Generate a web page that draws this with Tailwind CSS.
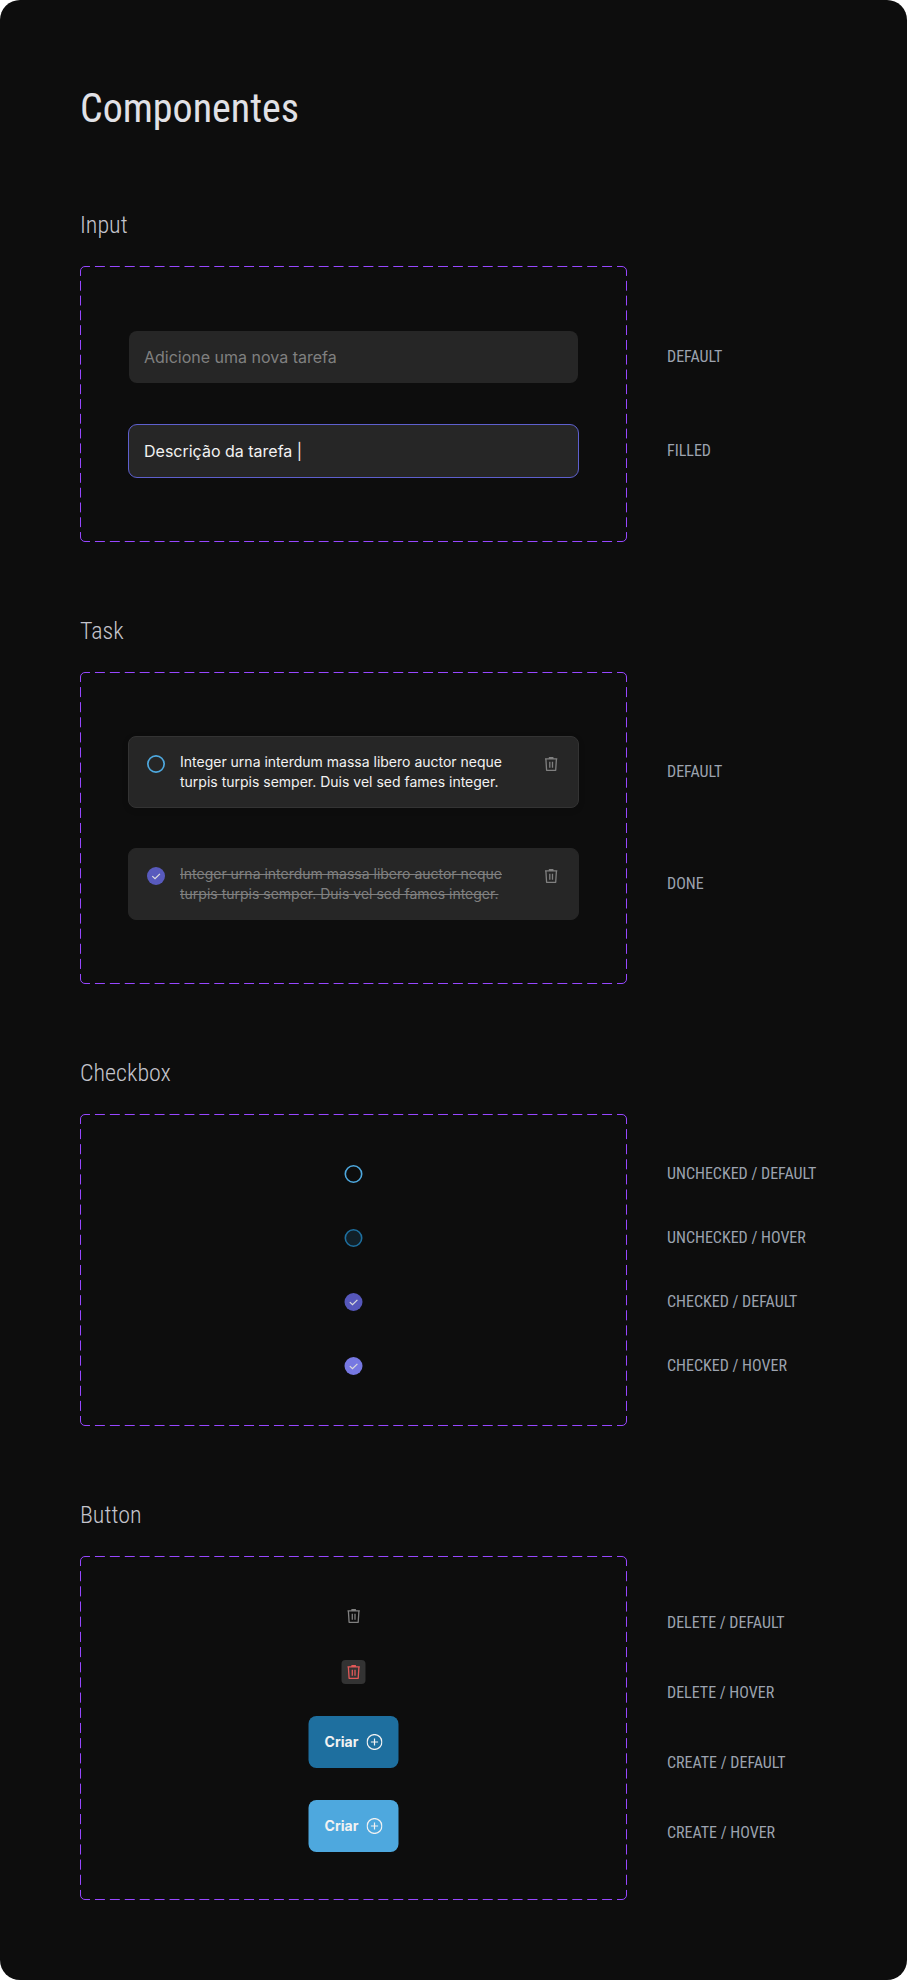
<!DOCTYPE html>
<html lang="pt-BR">
<head>
<meta charset="utf-8">
<title>Componentes</title>
<script src="https://cdn.jsdelivr.net/npm/@tailwindcss/browser@4"></script>
</head>
<body class="bg-white">
<svg width="0" height="0" class="hidden">
  <symbol id="trash" viewBox="0 0 24 24">
    <path d="M6 6.9H18.3M10.4 6.4V5.6H13.9V6.4M6.9 7.2L7.6 18.3H16.7L17.4 7.2" fill="none" stroke="currentColor" stroke-width="1.3" stroke-linejoin="round"/>
    <path d="M10.8 9.8V15.8M13.5 9.8V15.8" fill="none" stroke="currentColor" stroke-width="1.3"/>
  </symbol>
  <symbol id="check" viewBox="0 0 24 24">
    <circle cx="12" cy="12" r="9" fill="currentColor"/>
    <path d="M8.3 12.1L11 14.7L15.9 9.8" fill="none" stroke="#f2f2f2" stroke-width="1.2"/>
  </symbol>
  <symbol id="plus" viewBox="0 0 16 16">
    <circle cx="8" cy="8" r="7.4" fill="none" stroke="currentColor" stroke-width="1.3"/>
    <path d="M8 4.4V11.6M4.4 8H11.6" fill="none" stroke="currentColor" stroke-width="1.2"/>
  </symbol>
</svg>
<main class="w-[907px] h-[1980px] rounded-[20px] bg-[#0d0d0d] pl-20 pt-[85px] font-['Inter',sans-serif]">
  <h1 class="font-['Roboto_Condensed','Roboto',sans-serif] [font-stretch:75%] text-[40px] leading-[47px] text-[#e1e1e6] font-normal">Componentes</h1>

  <section class="mt-[79px]">
    <h2 class="font-['Roboto_Condensed','Roboto',sans-serif] [font-stretch:75%] text-2xl leading-7 font-light text-[#c4c4cc]">Input</h2>
    <div class="mt-[27px] flex gap-10">
      <div class="grid w-[547px] h-[276px]">
        <svg class="col-start-1 row-start-1" width="547" height="276" fill="none" stroke="#9747ff">
          <path d="M.5 5A4.5 4.5 0 0 1 5 .5M542 .5A4.5 4.5 0 0 1 546.5 5M546.5 271A4.5 4.5 0 0 1 542 275.5M5 275.5A4.5 4.5 0 0 1 .5 271"/>
          <path pathLength="540" stroke-dasharray="10 5" stroke-dashoffset="5" d="M5 .5H542"/>
          <path pathLength="540" stroke-dasharray="10 5" stroke-dashoffset="5" d="M5 275.5H542"/>
          <path pathLength="270" stroke-dasharray="10 5" stroke-dashoffset="5" d="M.5 5V271"/>
          <path pathLength="270" stroke-dasharray="10 5" stroke-dashoffset="5" d="M546.5 5V271"/>
        </svg>
        <div class="col-start-1 row-start-1 flex flex-col items-center pt-[65px] gap-[41px]">
          <div class="w-[449px] h-[52px] rounded-lg bg-[#262626] px-[15px] flex items-center text-base text-[#808080]">Adicione uma nova tarefa</div>
          <div class="w-[451px] h-[54px] rounded-[9px] border border-[#5e60ce] bg-[#262626] px-[15px] flex items-center text-base text-[#f2f2f2]">Descrição da tarefa |</div>
        </div>
      </div>
      <div class="flex flex-col pt-[81px] gap-[75px] font-['Roboto_Condensed','Roboto',sans-serif] [font-stretch:75%] text-base leading-[19px] text-[#9ca3af]"><span>DEFAULT</span><span>FILLED</span></div>
    </div>
  </section>

  <section class="mt-[75px]">
    <h2 class="font-['Roboto_Condensed','Roboto',sans-serif] [font-stretch:75%] text-2xl leading-7 font-light text-[#c4c4cc]">Task</h2>
    <div class="mt-[27px] flex gap-10">
      <div class="grid w-[547px] h-[312px]">
        <svg class="col-start-1 row-start-1" width="547" height="312" fill="none" stroke="#9747ff">
          <path d="M.5 5A4.5 4.5 0 0 1 5 .5M542 .5A4.5 4.5 0 0 1 546.5 5M546.5 307A4.5 4.5 0 0 1 542 311.5M5 311.5A4.5 4.5 0 0 1 .5 307"/>
          <path pathLength="540" stroke-dasharray="10 5" stroke-dashoffset="5" d="M5 .5H542"/>
          <path pathLength="540" stroke-dasharray="10 5" stroke-dashoffset="5" d="M5 311.5H542"/>
          <path pathLength="300" stroke-dasharray="10 5" stroke-dashoffset="5" d="M.5 5V307"/>
          <path pathLength="300" stroke-dasharray="10 5" stroke-dashoffset="5" d="M546.5 5V307"/>
        </svg>
        <div class="col-start-1 row-start-1 flex flex-col items-center pt-16 gap-10">
          <div class="w-[451px] h-[72px] rounded-lg border border-[#333333] bg-[#262626] p-[15px] flex items-start gap-3 shadow-[0_2px_8px_rgba(0,0,0,0.06)]">
            <svg class="size-6 shrink-0" viewBox="0 0 24 24"><circle cx="12" cy="12" r="8.15" fill="none" stroke="#4ea8de" stroke-width="1.7"/></svg>
            <p class="w-[347px] text-sm leading-5 text-[#f2f2f2]">Integer urna interdum massa libero auctor neque turpis turpis semper. Duis vel sed fames integer.</p>
            <svg class="size-6 shrink-0 text-[#808080]"><use href="#trash"/></svg>
          </div>
          <div class="w-[451px] h-[72px] rounded-lg border border-[#262626] bg-[#262626] p-[15px] flex items-start gap-3">
            <svg class="size-6 shrink-0 opacity-90 text-[#5e60ce]"><use href="#check"/></svg>
            <p class="w-[347px] text-sm leading-5 text-[#808080] line-through">Integer urna interdum massa libero auctor neque turpis turpis semper. Duis vel sed fames integer.</p>
            <svg class="size-6 shrink-0 text-[#808080]"><use href="#trash"/></svg>
          </div>
        </div>
      </div>
      <div class="flex flex-col pt-[90px] gap-[93px] font-['Roboto_Condensed','Roboto',sans-serif] [font-stretch:75%] text-base leading-[19px] text-[#9ca3af]"><span>DEFAULT</span><span>DONE</span></div>
    </div>
  </section>

  <section class="mt-[75px]">
    <h2 class="font-['Roboto_Condensed','Roboto',sans-serif] [font-stretch:75%] text-2xl leading-7 font-light text-[#c4c4cc]">Checkbox</h2>
    <div class="mt-[27px] flex gap-10">
      <div class="grid w-[547px] h-[312px]">
        <svg class="col-start-1 row-start-1" width="547" height="312" fill="none" stroke="#9747ff">
          <path d="M.5 5A4.5 4.5 0 0 1 5 .5M542 .5A4.5 4.5 0 0 1 546.5 5M546.5 307A4.5 4.5 0 0 1 542 311.5M5 311.5A4.5 4.5 0 0 1 .5 307"/>
          <path pathLength="540" stroke-dasharray="10 5" stroke-dashoffset="5" d="M5 .5H542"/>
          <path pathLength="540" stroke-dasharray="10 5" stroke-dashoffset="5" d="M5 311.5H542"/>
          <path pathLength="300" stroke-dasharray="10 5" stroke-dashoffset="5" d="M.5 5V307"/>
          <path pathLength="300" stroke-dasharray="10 5" stroke-dashoffset="5" d="M546.5 5V307"/>
        </svg>
        <div class="col-start-1 row-start-1 flex flex-col items-center pt-12 gap-10">
          <svg class="w-[25px] h-6" viewBox="0 0 24 24"><circle cx="12" cy="12" r="8.2" fill="none" stroke="#4ea8de" stroke-width="1.6"/></svg>
          <svg class="w-[25px] h-6" viewBox="0 0 24 24"><circle cx="12" cy="12" r="8.2" fill="#112029" stroke="#1e6f9f" stroke-width="1.6"/></svg>
          <svg class="w-[25px] h-6 opacity-90 text-[#5e60ce]"><use href="#check"/></svg>
          <svg class="w-[25px] h-6 opacity-90 text-[#8284fa]"><use href="#check"/></svg>
        </div>
      </div>
      <div class="flex flex-col pt-[50px] gap-[45px] font-['Roboto_Condensed','Roboto',sans-serif] [font-stretch:75%] text-base leading-[19px] text-[#9ca3af]"><span>UNCHECKED / DEFAULT</span><span>UNCHECKED / HOVER</span><span>CHECKED / DEFAULT</span><span>CHECKED / HOVER</span></div>
    </div>
  </section>

  <section class="mt-[75px]">
    <h2 class="font-['Roboto_Condensed','Roboto',sans-serif] [font-stretch:75%] text-2xl leading-7 font-light text-[#c4c4cc]">Button</h2>
    <div class="mt-[27px] flex gap-10">
      <div class="grid w-[547px] h-[344px]">
        <svg class="col-start-1 row-start-1" width="547" height="344" fill="none" stroke="#9747ff">
          <path d="M.5 5A4.5 4.5 0 0 1 5 .5M542 .5A4.5 4.5 0 0 1 546.5 5M546.5 339A4.5 4.5 0 0 1 542 343.5M5 343.5A4.5 4.5 0 0 1 .5 339"/>
          <path pathLength="540" stroke-dasharray="10 5" stroke-dashoffset="5" d="M5 .5H542"/>
          <path pathLength="540" stroke-dasharray="10 5" stroke-dashoffset="5" d="M5 343.5H542"/>
          <path pathLength="330" stroke-dasharray="10 5" stroke-dashoffset="5" d="M.5 5V339"/>
          <path pathLength="330" stroke-dasharray="10 5" stroke-dashoffset="5" d="M546.5 5V339"/>
        </svg>
        <div class="col-start-1 row-start-1 flex flex-col items-center pt-12 pr-px gap-8 translate-x-[0.5px]">
          <button class="size-6 rounded text-[#808080]"><svg class="size-6"><use href="#trash"/></svg></button>
          <button class="size-6 rounded bg-[#333333] text-[#e25858]"><svg class="size-6"><use href="#trash"/></svg></button>
          <button class="w-[90px] h-[52px] rounded-lg bg-[#1e6f9f] text-[#f2f2f2] flex items-center justify-center gap-2 text-sm font-bold">Criar <svg class="size-4"><use href="#plus"/></svg></button>
          <button class="w-[90px] h-[52px] rounded-lg bg-[#4ea8de] text-[#f2f2f2] flex items-center justify-center gap-2 text-sm font-bold">Criar <svg class="size-4"><use href="#plus"/></svg></button>
        </div>
      </div>
      <div class="flex flex-col pt-[57px] gap-[51px] font-['Roboto_Condensed','Roboto',sans-serif] [font-stretch:75%] text-base leading-[19px] text-[#9ca3af]"><span>DELETE / DEFAULT</span><span>DELETE / HOVER</span><span>CREATE / DEFAULT</span><span>CREATE / HOVER</span></div>
    </div>
  </section>
</main>
</body>
</html>
